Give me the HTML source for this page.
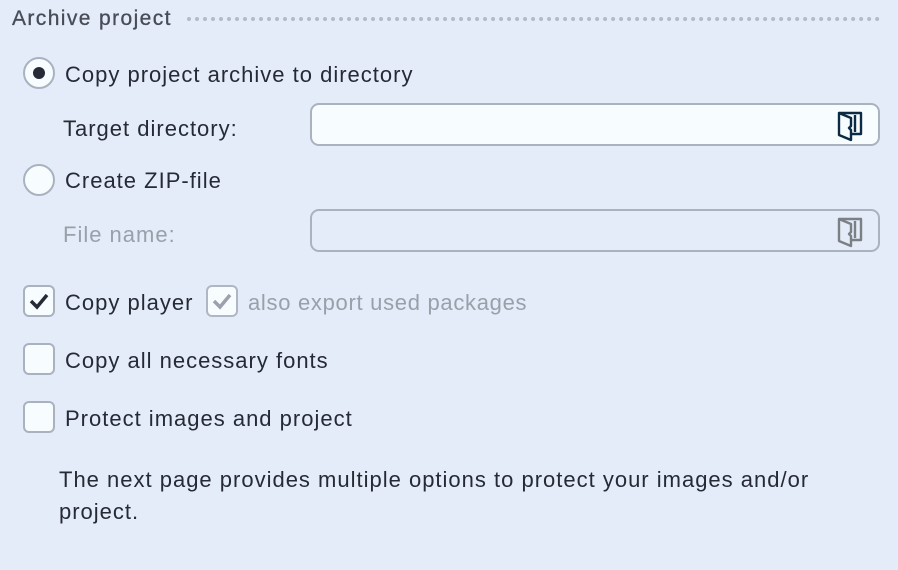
<!DOCTYPE html>
<html><head><style>
body{margin:0;width:898px;height:570px;background:#e3ecf8;font-family:"Liberation Sans",sans-serif;color:#262a36;position:relative;overflow:hidden}
.a{position:absolute;white-space:nowrap}
.t{font-size:22px;letter-spacing:1px}
.r{position:absolute;width:28px;height:28px;border:2px solid #aab2bf;border-radius:50%;background:#f7fdff}
.c{position:absolute;width:28px;height:28px;border:2px solid #aab2bf;border-radius:6px;background:#f7fdff}
.in{position:absolute;left:310px;width:566px;height:39px;border:2px solid #aab2bf;border-radius:9px}
</style></head><body>
<div class="a" style="left:12px;top:7px;font-size:21px;color:#474c57;letter-spacing:1.4px;-webkit-text-stroke:0.3px #474c57">Archive project</div>
<div class="a" style="left:187px;top:17px;width:693px;border-top:4px dotted #b4bbc6"></div>
<div class="r" style="left:23px;top:57px"><div style="position:absolute;left:8px;top:8px;width:12px;height:12px;border-radius:50%;background:#262a36"></div></div>
<div class="a t" style="left:65px;top:62px">Copy project archive to directory</div>
<div class="a t" style="left:63px;top:116px">Target directory:</div>
<div class="in" style="top:103px;background:#f7fdff"><svg style="position:absolute;left:524px;top:5px" width="28" height="32" viewBox="0 0 28 32" fill="none" stroke="#0d2a45" stroke-width="2.4" stroke-linejoin="round"><path d="M3 3 L15 8 V16 L13 18 L15 20 V30 L3 25 Z"/><path d="M3 3 H25 V24 H15"/><path d="M19 5 V22"/></svg></div>
<div class="r" style="left:23px;top:164px"></div>
<div class="a t" style="left:65px;top:168px">Create ZIP-file</div>
<div class="a t" style="left:63px;top:222px;color:#9aa0ab">File name:</div>
<div class="in" style="top:209px;background:#e3ecf8"><svg style="position:absolute;left:524px;top:5px" width="28" height="32" viewBox="0 0 28 32" fill="none" stroke="#7c7f84" stroke-width="2.4" stroke-linejoin="round"><path d="M3 3 L15 8 V16 L13 18 L15 20 V30 L3 25 Z"/><path d="M3 3 H25 V24 H15"/><path d="M19 5 V22"/></svg></div>
<div class="c" style="left:23px;top:285px"><svg width="28" height="28" viewBox="0 0 28 28"><path d="M6 14 L12 20 L22 8" fill="none" stroke="#262a36" stroke-width="3.5"/></svg></div>
<div class="a t" style="left:65px;top:290px">Copy player</div>
<div class="c" style="left:206px;top:285px;border-color:#b0b7c2"><svg width="28" height="28" viewBox="0 0 28 28"><path d="M6 14 L12 20 L22 8" fill="none" stroke="#9ca2ac" stroke-width="3.5"/></svg></div>
<div class="a t" style="left:248px;top:290px;color:#9aa0ab;letter-spacing:0.7px">also export used packages</div>
<div class="c" style="left:23px;top:343px"></div>
<div class="a t" style="left:65px;top:348px">Copy all necessary fonts</div>
<div class="c" style="left:23px;top:401px"></div>
<div class="a t" style="left:65px;top:406px">Protect images and project</div>
<div class="a t" style="left:59px;top:464px;line-height:32px;white-space:normal;width:790px">The next page provides multiple options to protect your images and/or project.</div>
</body></html>
